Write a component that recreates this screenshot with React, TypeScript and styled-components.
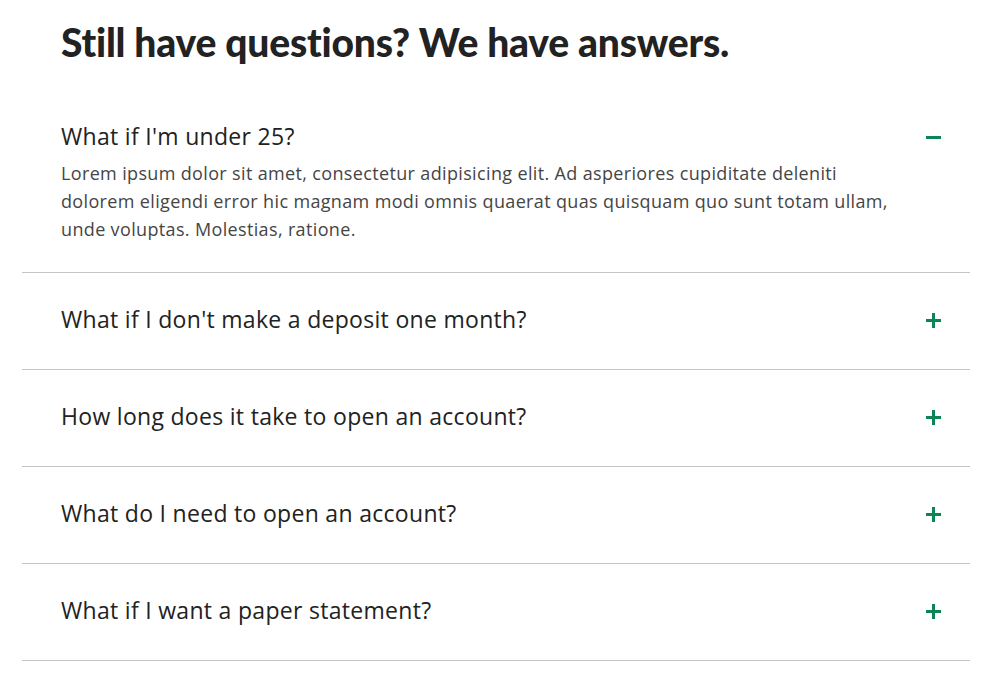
import React, { useState } from "react";
import styled, { createGlobalStyle } from "styled-components";

const Global = createGlobalStyle`
  html, body { margin: 0; padding: 0; background: #fff; }
  * { box-sizing: border-box; }
`;

const Page = styled.div`
  padding: 20px 22px 0 22px;
  font-family: "Open Sans", sans-serif;
`;

const Title = styled.h2`
  margin: 0 0 0 39px;
  font-family: "Lato", sans-serif;
  font-weight: 900;
  font-size: 39px;
  line-height: 44px;
  color: #222;
  letter-spacing: -0.2px;
`;

const List = styled.div`
  margin-top: 26px;
`;

const Item = styled.div`
  border-bottom: 1px solid #c4c4c4;
`;

const Header = styled.button<{ $open: boolean }>`
  display: flex;
  align-items: center;
  justify-content: space-between;
  width: 100%;
  background: none;
  border: 0;
  cursor: pointer;
  text-align: left;
  padding: 34px 29px ${(p) => (p.$open ? "11px" : "38px")} 39px;
`;

const Question = styled.span`
  font-family: "Open Sans", sans-serif;
  font-size: 23px;
  line-height: 24px;
  letter-spacing: 0.3px;
  color: #222;
`;

const Answer = styled.p`
  margin: 0;
  padding: 0 60px 29px 39px;
  font-family: "Open Sans", sans-serif;
  font-size: 18px;
  line-height: 28px;
  letter-spacing: 0.35px;
  color: #454545;
`;

const IconSvg = styled.svg`
  flex: none;
  margin-top: 3px;
`;

const Icon = ({ open }: { open: boolean }) => (
  <IconSvg width="15" height="15" viewBox="0 0 15 15" aria-hidden>
    <rect x="0" y="6" width="15" height="3" fill="#0b8456" />
    {!open && <rect x="6" y="0" width="3" height="15" fill="#0b8456" />}
  </IconSvg>
);

const faqs = [
  {
    q: "What if I'm under 25?",
    a: "Lorem ipsum dolor sit amet, consectetur adipisicing elit. Ad asperiores cupiditate deleniti dolorem eligendi error hic magnam modi omnis quaerat quas quisquam quo sunt totam ullam, unde voluptas. Molestias, ratione.",
  },
  { q: "What if I don't make a deposit one month?", a: "Lorem ipsum dolor sit amet." },
  { q: "How long does it take to open an account?", a: "Lorem ipsum dolor sit amet." },
  { q: "What do I need to open an account?", a: "Lorem ipsum dolor sit amet." },
  { q: "What if I want a paper statement?", a: "Lorem ipsum dolor sit amet." },
];

export default function App() {
  const [open, setOpen] = useState<number | null>(0);
  return (
    <Page>
      <Global />
      <Title>Still have questions? We have answers.</Title>
      <List>
        {faqs.map((f, i) => {
          const isOpen = open === i;
          return (
            <Item key={f.q}>
              <Header $open={isOpen} onClick={() => setOpen(isOpen ? null : i)}>
                <Question>{f.q}</Question>
                <Icon open={isOpen} />
              </Header>
              {isOpen && <Answer>{f.a}</Answer>}
            </Item>
          );
        })}
      </List>
    </Page>
  );
}
